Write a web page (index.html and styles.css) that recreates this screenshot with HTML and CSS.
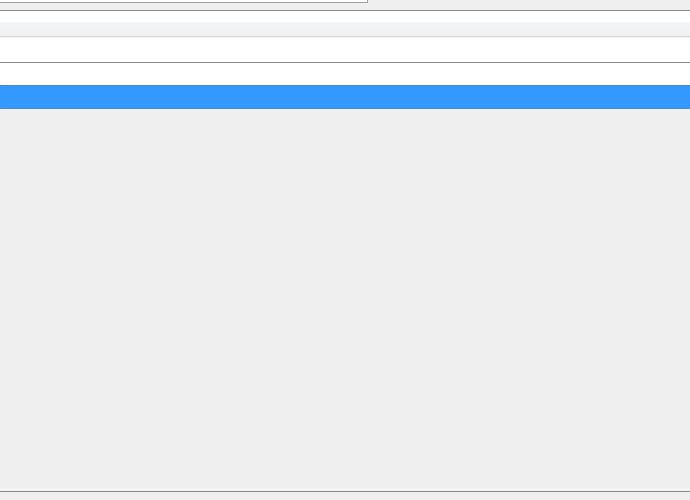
FILE: index.html
```html
<!DOCTYPE html>
<html>
<head>
<meta charset="utf-8">
<link rel="stylesheet" href="styles.css">
</head>
<body>
<div class="app">
  <div class="topbar">
    <div class="search"></div>
  </div>
  <div class="tabs">
    <div class="tab-space"></div>
    <div class="tab-strip"></div>
  </div>
  <div class="row row-plain"></div>
  <div class="row row-plain2"></div>
  <div class="row row-selected"></div>
  <div class="content"></div>
  <div class="statusbar"></div>
</div>
</body>
</html>
```
FILE: styles.css
```css
html, body {
  margin: 0;
  padding: 0;
  background: #efefef;
  font-family: "Liberation Sans", Arial, sans-serif;
}
.app {
  width: 690px;
  height: 500px;
  display: flex;
  flex-direction: column;
  overflow: hidden;
}
.topbar {
  height: 10px;
  background: #efefef;
  border-bottom: 1px solid #8a8a8a;
  flex: none;
}
.search {
  width: 367px;
  height: 2px;
  background: #ffffff;
  border-right: 1px solid #a0a0a0;
  border-bottom: 1px solid #a0a0a0;
}
.tabs {
  flex: none;
  display: flex;
  flex-direction: column;
}
.tab-space {
  height: 11px;
  background: #ffffff;
}
.tab-strip {
  height: 14px;
  background: linear-gradient(#f4f5f7, #eff0f2);
  border-bottom: 1px solid #d8d8d8;
}
.row {
  flex: none;
}
.row-plain {
  height: 24px;
  background: #ffffff;
  border-top: 1px solid #f0f0f0;
  border-bottom: 1px solid #8a8a8a;
}
.row-plain2 {
  height: 22px;
  background: #ffffff;
}
.row-selected {
  height: 22px;
  background: #3399ff;
  border-top: 1px dotted #6a7a8a;
  border-bottom: 1px dotted #6a7a8a;
}
.content {
  flex: 1;
  background: #efefef;
}
.statusbar {
  flex: none;
  height: 10px;
  border-top: 1px solid #fafafa;
  background: linear-gradient(#efefef 0, #efefef 1px, #8a8a8a 1px, #8a8a8a 2px, #efefef 2px);
}
```
